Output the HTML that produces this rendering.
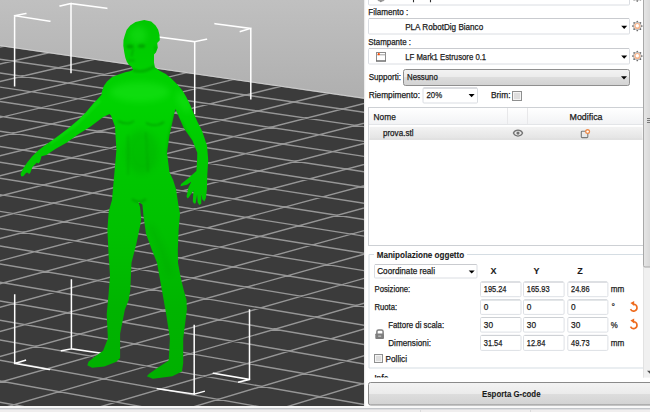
<!DOCTYPE html>
<html><head><meta charset="utf-8"><style>
html,body{margin:0;padding:0;}
body{width:650px;height:412px;overflow:hidden;position:relative;background:#ffffff;font-family:"Liberation Sans",sans-serif;}
</style></head><body>
<svg width="364" height="406" viewBox="0 0 364 406" style="position:absolute;left:0;top:0">
<defs><linearGradient id="bg" x1="0" y1="0" x2="0" y2="1"><stop offset="0" stop-color="#c0c0c0"/><stop offset="1" stop-color="#7a7a7a"/></linearGradient>
<clipPath id="fl"><path d="M0 45.64L364 98.22L364 406L0 406Z"/></clipPath></defs>
<rect width="364" height="406" fill="url(#bg)"/>
<path d="M0 45.64L364 98.22L364 406L0 406Z" fill="#3b3b3b"/>
<g clip-path="url(#fl)"><path d="M-811.4 -71.6L3835.6 599.8M-848.7 -64.7L3817.2 616.4M-886.5 -57.8L3798.6 633.3M-924.7 -50.7L3779.5 650.5M-963.2 -43.6L3760.2 668.0M-1002.3 -36.4L3740.5 685.9M-1041.8 -29.2L3720.4 704.0M-1081.7 -21.8L3700.0 722.5M-1122.1 -14.4L3679.2 741.3M-1162.9 -6.9L3658.0 760.5M-1204.2 0.7L3636.4 780.1M-1246.1 8.4L3614.4 800.0M-1288.4 16.2L3592.0 820.3M-1331.2 24.1L3569.1 841.0M-1374.5 32.1L3545.8 862.0M-1418.3 40.2L3522.1 883.6M-1462.6 48.3L3497.8 905.5M-1507.5 56.6L3473.1 927.9M-1553.0 65.0L3447.9 950.7M-1599.0 73.4L3422.1 974.0M-1645.5 82.0L3395.9 997.8M-1692.7 90.7L3369.0 1022.1M-1740.4 99.5L3341.6 1046.9M-1788.7 108.4L3313.6 1072.2M-1837.7 117.4L3285.0 1098.1M-1887.2 126.5L3255.8 1124.6M-1937.4 135.7L3226.0 1151.6M-1988.3 145.1L3195.4 1179.2M-2039.8 154.6L3164.2 1207.5M-2091.9 164.2L3132.2 1236.4M-2144.8 173.9L3099.6 1266.0M-2198.4 183.8L3066.1 1296.3M-2252.6 193.8L3031.9 1327.3M-2307.6 203.9L2996.8 1359.0M-2363.4 214.2L2960.9 1391.5M-2419.9 224.6L2924.1 1424.8M-2477.1 235.1L2886.4 1459.0M-2535.2 245.8L2847.7 1494.0M-2594.1 256.6L2808.0 1529.9M-2653.8 267.6L2767.4 1566.7M-811.4 -71.6L-4132.9 540.0M-774.2 -66.2L-4099.8 552.1M-736.6 -60.8L-4066.2 564.5M-698.6 -55.3L-4032.1 577.0M-660.3 -49.8L-3997.6 589.7M-621.7 -44.2L-3962.6 602.6M-582.7 -38.5L-3927.1 615.7M-543.3 -32.9L-3891.2 628.9M-503.6 -27.1L-3854.7 642.3M-463.5 -21.3L-3817.6 656.0M-423.0 -15.5L-3780.1 669.8M-382.2 -9.6L-3742.0 683.8M-340.9 -3.6L-3703.3 698.0M-299.2 2.4L-3664.1 712.5M-257.2 8.5L-3624.2 727.1M-214.7 14.6L-3583.8 742.0M-171.8 20.8L-3542.8 757.1M-128.5 27.1L-3501.1 772.4M-84.8 33.4L-3458.9 788.0M-40.7 39.8L-3415.9 803.8M3.9 46.2L-3372.3 819.9M49.0 52.7L-3328.0 836.2M94.5 59.3L-3283.0 852.7M140.4 65.9L-3237.3 869.6M186.9 72.6L-3190.8 886.7M233.8 79.4L-3143.6 904.0M281.1 86.3L-3095.6 921.7M329.0 93.2L-3046.9 939.6M377.3 100.2L-2997.3 957.9M426.2 107.2L-2946.9 976.4M475.6 114.3L-2895.6 995.3M525.5 121.6L-2843.5 1014.5M575.9 128.8L-2790.5 1034.0M626.8 136.2L-2736.5 1053.9M678.3 143.6L-2681.6 1074.1M730.4 151.2L-2625.8 1094.6M783.0 158.8L-2568.9 1115.5M836.2 166.4L-2511.0 1136.8M889.9 174.2L-2452.1 1158.5M944.3 182.1L-2392.1 1180.6M999.3 190.0L-2331.0 1203.1M1054.8 198.0L-2268.7 1226.0M1111.0 206.1L-2205.3 1249.3M1167.8 214.3L-2140.7 1273.1M1225.3 222.7L-2074.8 1297.4M1283.4 231.0L-2007.7 1322.1M1342.2 239.5L-1939.3 1347.3M1401.6 248.1L-1869.5 1372.9M1461.7 256.8L-1798.3 1399.1M1522.6 265.6L-1725.6 1425.9M1584.1 274.5L-1651.5 1453.1M1646.4 283.5L-1575.9 1481.0M1709.4 292.6L-1498.7 1509.4M1773.1 301.8L-1419.9 1538.4M1837.6 311.1L-1339.5 1568.0M1902.9 320.5L-1257.3 1598.3M1969.0 330.1L-1173.3 1629.2M2035.9 339.8L-1087.5 1660.7M2103.6 349.5L-999.7 1693.0M2172.1 359.4L-910.1 1726.0M2241.5 369.5L-818.3 1759.8M2311.8 379.6L-724.5 1794.3M2382.9 389.9L-628.6 1829.6M2454.9 400.3L-530.3 1865.8M2527.9 410.8L-429.8 1902.8M2601.8 421.5L-326.8 1940.7M2676.6 432.3L-221.3 1979.5M2752.4 443.3L-113.3 2019.3M2829.2 454.4L-2.5 2060.0M2907.0 465.6L111.0 2101.8M2985.9 477.0L227.5 2144.7M3065.7 488.5L346.9 2188.6M3146.7 500.2L469.5 2233.7M3228.7 512.1L595.4 2280.1M3311.9 524.1L724.6 2327.6M3396.2 536.3L857.3 2376.5M3481.7 548.6L993.7 2426.7M3568.3 561.1L1133.9 2478.3M3656.2 573.8L1278.2 2531.3M3745.3 586.7L1426.5 2585.9" stroke="#969696" stroke-width="1.4" fill="none"/></g>
<path d="M0.0 45.6L364.0 98.2" stroke="#d0d0d0" stroke-width="1" fill="none"/>
<path d="M14.6 15.7L14.6 85.7M14.6 15.7L49.8 21.2M14.6 15.7L25.8 13.6M71.0 3.5L71.0 72.6M71.0 3.5L106.7 8.3M71.0 3.5L60.1 5.9M194.7 41.7L194.7 113.4M194.7 41.7L158.5 36.9M194.7 41.7L206.4 39.3M250.8 28.4L250.8 98.8M250.8 28.4L215.1 23.7M250.8 28.4L240.4 31.5M14.7 294.9L14.7 363.5M14.7 363.5L49.4 369.4M14.7 363.5L25.4 360.3M71.4 279.9L71.4 348.8M71.4 348.8L106.7 354.0M71.4 348.8L61.5 350.7M194.2 325.5L194.2 394.1M194.2 394.1L157.4 388.8M194.2 394.1L204.1 391.4M249.5 310.0L249.5 379.4M249.5 379.4L213.4 373.3M249.5 379.4L238.8 382.1" stroke="#ffffff" stroke-width="1.5" fill="none" stroke-linecap="square"/>
<clipPath id="figc"><path d="M144.2 20.1L151.2 21.4L155.6 25.4L158.2 29.7L159.5 35.0L159.8 40.2L157.2 43.0L157.8 47.8L155.9 52.6L154.0 54.6L154.0 62.4L154.9 67.2L157.8 69.2L159.1 70.5L165.8 74.1L171.8 79.0L177.9 85.1L182.8 91.1L186.4 97.2L190.0 104.5L193.1 112.0L197.5 122.0L202.1 130.9L207.0 145.5L208.2 160.0L207.3 174.6L206.9 189.1L205.9 197.9L204.4 201.5L202.2 199.3L201.5 194.2L201.2 203.7L199.3 204.9L197.6 202.2L197.1 194.2L195.7 203.0L194.2 203.7L192.8 201.5L193.5 190.6L189.1 197.1L187.7 198.6L186.5 196.4L188.4 187.7L191.3 181.8L186.9 184.8L180.4 186.2L181.1 184.0L189.1 177.5L196.4 170.9L197.1 160.0L197.3 152.7L192.4 140.6L184.0 128.5L175.5 109.1L174.2 114.0L169.4 135.8L167.0 152.7L169.4 172.1L173.1 180.0L176.0 189.1L178.2 203.7L180.0 214.0L178.6 230.0L177.8 250.0L178.0 263.0L180.8 278.0L183.7 290.0L186.5 300.0L186.9 309.4L183.2 338.6L183.2 362.9L182.0 371.4L172.3 376.2L152.9 378.7L146.8 376.2L149.2 373.8L157.7 367.7L168.7 360.4L169.9 338.6L166.2 314.3L161.9 290.0L157.0 262.8L152.2 250.7L146.0 233.7L143.6 216.7L142.4 204.6L138.5 202.0L140.0 207.0L141.2 219.0L140.0 226.4L136.4 243.4L131.5 262.8L130.3 290.0L128.7 300.0L124.9 309.4L120.1 333.7L120.1 349.5L120.1 358.0L116.4 361.7L104.3 366.5L92.1 367.7L87.3 365.3L88.5 361.7L94.6 356.8L103.1 350.7L107.9 338.6L106.7 314.3L108.5 295.0L110.0 275.4L108.7 256.8L107.4 230.0L108.7 211.4L112.0 200.0L114.4 172.9L116.4 150.0L115.0 126.6L111.0 115.5L109.5 114.0L103.2 117.1L90.6 126.6L77.9 134.5L66.9 142.4L55.8 148.7L46.3 155.0L41.5 156.3L40.0 161.4L38.5 163.5L36.9 162.4L33.4 166.0L32.3 167.6L30.3 172.7L28.8 174.2L28.3 172.7L26.2 172.7L23.2 176.2L21.1 176.2L20.6 173.7L23.2 168.6L27.2 162.4L32.3 156.3L38.5 150.2L44.7 145.6L55.8 137.7L68.4 128.2L77.9 120.3L85.8 112.4L93.7 102.9L97.3 99.6L101.5 94.8L102.1 91.1L104.0 85.7L107.0 81.4L111.8 77.2L117.9 74.7L125.2 72.3L130.0 71.2L133.1 69.8L131.6 66.7L128.7 64.8L126.7 61.4L125.3 57.5L124.3 52.6L123.3 45.8L123.5 40.0L124.6 35.9L126.7 29.7L130.2 25.4L135.5 21.9Z"/></clipPath>
<filter id="bl4" x="-50%" y="-50%" width="200%" height="200%"><feGaussianBlur stdDeviation="3"/></filter>
<filter id="bl1" x="-50%" y="-50%" width="200%" height="200%"><feGaussianBlur stdDeviation="1"/></filter>
<linearGradient id="figg" gradientUnits="userSpaceOnUse" x1="0" y1="20" x2="0" y2="380"><stop offset="0" stop-color="#00c800"/><stop offset="0.22" stop-color="#00d400"/><stop offset="0.4" stop-color="#00c800"/><stop offset="0.6" stop-color="#00c000"/><stop offset="0.8" stop-color="#00b400"/><stop offset="1" stop-color="#00b000"/></linearGradient>
<path d="M144.2 20.1L151.2 21.4L155.6 25.4L158.2 29.7L159.5 35.0L159.8 40.2L157.2 43.0L157.8 47.8L155.9 52.6L154.0 54.6L154.0 62.4L154.9 67.2L157.8 69.2L159.1 70.5L165.8 74.1L171.8 79.0L177.9 85.1L182.8 91.1L186.4 97.2L190.0 104.5L193.1 112.0L197.5 122.0L202.1 130.9L207.0 145.5L208.2 160.0L207.3 174.6L206.9 189.1L205.9 197.9L204.4 201.5L202.2 199.3L201.5 194.2L201.2 203.7L199.3 204.9L197.6 202.2L197.1 194.2L195.7 203.0L194.2 203.7L192.8 201.5L193.5 190.6L189.1 197.1L187.7 198.6L186.5 196.4L188.4 187.7L191.3 181.8L186.9 184.8L180.4 186.2L181.1 184.0L189.1 177.5L196.4 170.9L197.1 160.0L197.3 152.7L192.4 140.6L184.0 128.5L175.5 109.1L174.2 114.0L169.4 135.8L167.0 152.7L169.4 172.1L173.1 180.0L176.0 189.1L178.2 203.7L180.0 214.0L178.6 230.0L177.8 250.0L178.0 263.0L180.8 278.0L183.7 290.0L186.5 300.0L186.9 309.4L183.2 338.6L183.2 362.9L182.0 371.4L172.3 376.2L152.9 378.7L146.8 376.2L149.2 373.8L157.7 367.7L168.7 360.4L169.9 338.6L166.2 314.3L161.9 290.0L157.0 262.8L152.2 250.7L146.0 233.7L143.6 216.7L142.4 204.6L138.5 202.0L140.0 207.0L141.2 219.0L140.0 226.4L136.4 243.4L131.5 262.8L130.3 290.0L128.7 300.0L124.9 309.4L120.1 333.7L120.1 349.5L120.1 358.0L116.4 361.7L104.3 366.5L92.1 367.7L87.3 365.3L88.5 361.7L94.6 356.8L103.1 350.7L107.9 338.6L106.7 314.3L108.5 295.0L110.0 275.4L108.7 256.8L107.4 230.0L108.7 211.4L112.0 200.0L114.4 172.9L116.4 150.0L115.0 126.6L111.0 115.5L109.5 114.0L103.2 117.1L90.6 126.6L77.9 134.5L66.9 142.4L55.8 148.7L46.3 155.0L41.5 156.3L40.0 161.4L38.5 163.5L36.9 162.4L33.4 166.0L32.3 167.6L30.3 172.7L28.8 174.2L28.3 172.7L26.2 172.7L23.2 176.2L21.1 176.2L20.6 173.7L23.2 168.6L27.2 162.4L32.3 156.3L38.5 150.2L44.7 145.6L55.8 137.7L68.4 128.2L77.9 120.3L85.8 112.4L93.7 102.9L97.3 99.6L101.5 94.8L102.1 91.1L104.0 85.7L107.0 81.4L111.8 77.2L117.9 74.7L125.2 72.3L130.0 71.2L133.1 69.8L131.6 66.7L128.7 64.8L126.7 61.4L125.3 57.5L124.3 52.6L123.3 45.8L123.5 40.0L124.6 35.9L126.7 29.7L130.2 25.4L135.5 21.9Z" fill="url(#figg)"/>
<g clip-path="url(#figc)">
<ellipse cx="140" cy="92" rx="30" ry="10" fill="#40ff40" opacity="0.22" filter="url(#bl4)"/>
<ellipse cx="138" cy="35" rx="9" ry="9" fill="#40ff40" opacity="0.22" filter="url(#bl4)"/>
<ellipse cx="142" cy="152" rx="16" ry="22" fill="#007000" opacity="0.12" filter="url(#bl4)"/>
<path d="M118 121Q128 126 134 121M146 123Q156 128 164 122" stroke="#006000" stroke-width="1.6" fill="none" opacity="0.35" filter="url(#bl1)"/>
<path d="M176 112L170 135L168 155" stroke="#006000" stroke-width="3" fill="none" opacity="0.25" filter="url(#bl1)"/>
<path d="M180 120L190 140L195 160" stroke="#006000" stroke-width="3" fill="none" opacity="0.15" filter="url(#bl1)"/>
<ellipse cx="184" cy="102" rx="6" ry="12" transform="rotate(-30 184 102)" fill="#40ff40" opacity="0.18" filter="url(#bl4)"/>
<path d="M100 100L75 125L50 143" stroke="#40ff40" stroke-width="4" fill="none" opacity="0.15" filter="url(#bl1)"/>
<path d="M128 135V175M146 132L148 172" stroke="#006000" stroke-width="1.5" fill="none" opacity="0.15" filter="url(#bl1)"/>
<ellipse cx="130" cy="46.5" rx="3.6" ry="1.9" fill="#006000" opacity="0.35" filter="url(#bl1)"/>
<ellipse cx="141.5" cy="46" rx="3.6" ry="1.9" fill="#006000" opacity="0.35" filter="url(#bl1)"/>
<path d="M133 49L131.5 56.5M128.5 60.5H134.5M155.5 46V52" stroke="#006000" stroke-width="1.4" fill="none" opacity="0.3" filter="url(#bl1)"/>
<path d="M133 70Q143 74 155 66" stroke="#006000" stroke-width="2.5" fill="none" opacity="0.3" filter="url(#bl1)"/>
<path d="M132 199Q139 205 146 199" stroke="#006000" stroke-width="2" fill="none" opacity="0.3" filter="url(#bl1)"/>
<path d="M150 225Q163 250 170 275" stroke="#006000" stroke-width="4" fill="none" opacity="0.12" filter="url(#bl4)"/>
</g>
</svg>
<svg width="650" height="412" viewBox="0 0 650 412" style="position:absolute;left:0;top:0" font-family="Liberation Sans, sans-serif">
<defs><linearGradient id="btn" x1="0" y1="0" x2="0" y2="1"><stop offset="0" stop-color="#f3f3f3"/><stop offset="0.5" stop-color="#ebebeb"/><stop offset="0.5" stop-color="#dddddd"/><stop offset="1" stop-color="#d2d2d2"/></linearGradient><linearGradient id="sel" x1="0" y1="0" x2="0" y2="1"><stop offset="0" stop-color="#f3f3f3"/><stop offset="1" stop-color="#e3e3e3"/></linearGradient><linearGradient id="hdr" x1="0" y1="0" x2="0" y2="1"><stop offset="0" stop-color="#ffffff"/><stop offset="1" stop-color="#f2f3f5"/></linearGradient><linearGradient id="thumb" x1="0" y1="0" x2="1" y2="0"><stop offset="0" stop-color="#e6e6e6"/><stop offset="1" stop-color="#d6d6d6"/></linearGradient></defs>
<rect x="364" y="0" width="286" height="406" fill="#ffffff"/><rect x="364" y="0" width="1.2" height="406" fill="#ececec"/>
<rect x="368.5" y="-11.5" width="261" height="16.5" rx="1" fill="#fff" stroke="#dadde2"/><line x1="369" y1="-11.5" x2="629" y2="-11.5" stroke="#c9cbcf"/>
<ellipse cx="381" cy="-1.5" rx="4" ry="3.2" fill="#9a9a9a"/><circle cx="380.8" cy="1.3" r="0.9" fill="#8a8a8a"/>
<path d="M413.5 0v2.2M430.5 0v2.2" stroke="#333" stroke-width="1.1"/>
<circle cx="637.3" cy="-3.5" r="4.0" fill="#e4e4e4" stroke="#9a9a9a" stroke-width="0.6"/><circle cx="641.80" cy="-3.50" r="0.85" fill="#707070"/><circle cx="640.48" cy="-0.32" r="0.85" fill="#707070"/><circle cx="637.30" cy="1.00" r="0.85" fill="#707070"/><circle cx="634.12" cy="-0.32" r="0.85" fill="#707070"/><circle cx="632.80" cy="-3.50" r="0.85" fill="#707070"/><circle cx="634.12" cy="-6.68" r="0.85" fill="#707070"/><circle cx="637.30" cy="-8.00" r="0.85" fill="#707070"/><circle cx="640.48" cy="-6.68" r="0.85" fill="#707070"/><circle cx="637.3" cy="-3.5" r="3.1" fill="#f6b48c"/><circle cx="637.3" cy="-3.8" r="1.7" fill="#ffffff"/>
<text x="368.3" y="15" font-size="9" textLength="40" lengthAdjust="spacingAndGlyphs" fill="#1a1a1a" stroke="#1a1a1a" stroke-width="0.25">Filamento :</text>
<rect x="368.5" y="18.5" width="261" height="15.5" rx="1" fill="#fff" stroke="#dadde2"/><line x1="369" y1="18.5" x2="629" y2="18.5" stroke="#c9cbcf"/>
<text x="405.2" y="30" font-size="9" textLength="78" lengthAdjust="spacingAndGlyphs" fill="#1a1a1a" stroke="#1a1a1a" stroke-width="0.25">PLA RobotDig Bianco</text>
<path d="M621.2 25.799999999999997L627.2 25.799999999999997L624.2 29.0Z" fill="#000"/>
<circle cx="637.3" cy="26" r="4.0" fill="#e4e4e4" stroke="#9a9a9a" stroke-width="0.6"/><circle cx="641.80" cy="26.00" r="0.85" fill="#707070"/><circle cx="640.48" cy="29.18" r="0.85" fill="#707070"/><circle cx="637.30" cy="30.50" r="0.85" fill="#707070"/><circle cx="634.12" cy="29.18" r="0.85" fill="#707070"/><circle cx="632.80" cy="26.00" r="0.85" fill="#707070"/><circle cx="634.12" cy="22.82" r="0.85" fill="#707070"/><circle cx="637.30" cy="21.50" r="0.85" fill="#707070"/><circle cx="640.48" cy="22.82" r="0.85" fill="#707070"/><circle cx="637.3" cy="26" r="3.1" fill="#f6b48c"/><circle cx="637.3" cy="25.7" r="1.7" fill="#ffffff"/>
<text x="368.3" y="45" font-size="9" textLength="42.7" lengthAdjust="spacingAndGlyphs" fill="#1a1a1a" stroke="#1a1a1a" stroke-width="0.25">Stampante :</text>
<rect x="368.5" y="48.5" width="261" height="15.5" rx="1" fill="#fff" stroke="#dadde2"/><line x1="369" y1="48.5" x2="629" y2="48.5" stroke="#c9cbcf"/>
<rect x="376.5" y="52.5" width="9" height="8.5" fill="#fff" stroke="#8c8c8c"/><line x1="376.5" y1="54.8" x2="385.5" y2="54.8" stroke="#a0a0a0"/><line x1="376" y1="61" x2="386" y2="61" stroke="#606060"/><circle cx="378.8" cy="54.2" r="1.1" fill="#ff4a00"/>
<text x="405.2" y="59.6" font-size="9" textLength="81" lengthAdjust="spacingAndGlyphs" fill="#1a1a1a" stroke="#1a1a1a" stroke-width="0.25">LF Mark1 Estrusore 0.1</text>
<path d="M621.2 55.6L627.2 55.6L624.2 58.800000000000004Z" fill="#000"/>
<circle cx="637.3" cy="56" r="4.0" fill="#e4e4e4" stroke="#9a9a9a" stroke-width="0.6"/><circle cx="641.80" cy="56.00" r="0.85" fill="#707070"/><circle cx="640.48" cy="59.18" r="0.85" fill="#707070"/><circle cx="637.30" cy="60.50" r="0.85" fill="#707070"/><circle cx="634.12" cy="59.18" r="0.85" fill="#707070"/><circle cx="632.80" cy="56.00" r="0.85" fill="#707070"/><circle cx="634.12" cy="52.82" r="0.85" fill="#707070"/><circle cx="637.30" cy="51.50" r="0.85" fill="#707070"/><circle cx="640.48" cy="52.82" r="0.85" fill="#707070"/><circle cx="637.3" cy="56" r="3.1" fill="#f6b48c"/><circle cx="637.3" cy="55.7" r="1.7" fill="#ffffff"/>
<text x="368.7" y="80.2" font-size="9" textLength="32.3" lengthAdjust="spacingAndGlyphs" fill="#1a1a1a" stroke="#1a1a1a" stroke-width="0.25">Supporti:</text>
<rect x="403.5" y="69.5" width="226" height="16" rx="2" fill="url(#btn)" stroke="#8f8f8f"/>
<text x="407" y="80.2" font-size="9" textLength="30.8" lengthAdjust="spacingAndGlyphs" fill="#1a1a1a" stroke="#1a1a1a" stroke-width="0.25">Nessuno</text>
<path d="M621.0 76.2L627.0 76.2L624 79.39999999999999Z" fill="#000"/>
<text x="368.7" y="98" font-size="9" textLength="51.3" lengthAdjust="spacingAndGlyphs" fill="#1a1a1a" stroke="#1a1a1a" stroke-width="0.25">Riempimento:</text>
<rect x="423.0" y="88.0" width="54.5" height="15.0" rx="1" fill="#fff" stroke="#dadde2"/><line x1="423.5" y1="88.0" x2="477" y2="88.0" stroke="#c9cbcf"/>
<text x="426.5" y="98" font-size="9" textLength="15.6" lengthAdjust="spacingAndGlyphs" fill="#1a1a1a" stroke="#1a1a1a" stroke-width="0.25">20%</text>
<path d="M468.6 94.0L474.6 94.0L471.6 97.19999999999999Z" fill="#000"/>
<text x="491" y="98" font-size="9" textLength="19.5" lengthAdjust="spacingAndGlyphs" fill="#1a1a1a" stroke="#1a1a1a" stroke-width="0.25">Brim:</text>
<rect x="512.5" y="91.5" width="9" height="9" fill="#f4f4f4" stroke="#8e8f8f"/><rect x="514" y="93" width="6" height="6" fill="#dedede"/>
<rect x="368.5" y="107.5" width="276" height="138" fill="#fff" stroke="#cdd0d4"/>
<rect x="369" y="108" width="274" height="16" fill="url(#hdr)"/>
<line x1="369" y1="124.5" x2="643" y2="124.5" stroke="#e3e5e8"/>
<line x1="507.5" y1="108" x2="507.5" y2="124" stroke="#e8e8ea"/><line x1="527.5" y1="108" x2="527.5" y2="124" stroke="#e8e8ea"/>
<text x="373.6" y="120.3" font-size="9" textLength="22.2" lengthAdjust="spacingAndGlyphs" fill="#1a1a1a" stroke="#1a1a1a" stroke-width="0.25">Nome</text>
<text x="569.5" y="120.3" font-size="9" textLength="33" lengthAdjust="spacingAndGlyphs" fill="#1a1a1a" stroke="#1a1a1a" stroke-width="0.25">Modifica</text>
<rect x="369.5" y="126.8" width="273" height="12.7" fill="url(#sel)"/><line x1="369.5" y1="139.2" x2="642.5" y2="139.2" stroke="#dadada"/>
<text x="382.9" y="136.3" font-size="9" textLength="30.6" lengthAdjust="spacingAndGlyphs" fill="#1a1a1a" stroke="#1a1a1a" stroke-width="0.25">prova.stl</text>
<path d="M513.4 133.1C515.2 129.2 520.8 129.2 522.6 133.1C520.8 137 515.2 137 513.4 133.1Z" fill="none" stroke="#737373" stroke-width="1.25"/><circle cx="518" cy="133.1" r="1.6" fill="#707070"/>
<rect x="581.3" y="131.3" width="6.5" height="6.3" rx="0.8" fill="none" stroke="#7a7a7a" stroke-width="1.1"/>
<circle cx="587.6" cy="131.6" r="2.5" fill="#f08a48"/><circle cx="587.6" cy="131.6" r="1.2" fill="#fff"/>
<path d="M369 368V254.5H374M467 254.5H643M369 368H643" fill="none" stroke="#d5dde3"/>
<text x="376.7" y="257.6" font-size="9" textLength="87.5" lengthAdjust="spacingAndGlyphs" font-weight="bold" fill="#1a1a1a" stroke="#1a1a1a" stroke-width="0.1">Manipolazione oggetto</text>
<rect x="374.5" y="264.5" width="102.5" height="13.5" rx="1" fill="#fff" stroke="#dadde2"/><line x1="375" y1="264.5" x2="476.5" y2="264.5" stroke="#c9cbcf"/>
<text x="377.2" y="274" font-size="9" textLength="57.8" lengthAdjust="spacingAndGlyphs" fill="#1a1a1a" stroke="#1a1a1a" stroke-width="0.25">Coordinate reali</text>
<path d="M468.7 270.4L474.7 270.4L471.7 273.6Z" fill="#000"/>
<text x="493.6" y="274.3" font-size="9" font-weight="bold" text-anchor="middle" fill="#1a1a1a" stroke="#1a1a1a" stroke-width="0.1">X</text>
<text x="536.6" y="274.3" font-size="9" font-weight="bold" text-anchor="middle" fill="#1a1a1a" stroke="#1a1a1a" stroke-width="0.1">Y</text>
<text x="579.9" y="274.3" font-size="9" font-weight="bold" text-anchor="middle" fill="#1a1a1a" stroke="#1a1a1a" stroke-width="0.1">Z</text>
<text x="374.5" y="292.2" font-size="9" textLength="35.7" lengthAdjust="spacingAndGlyphs" fill="#1a1a1a" stroke="#1a1a1a" stroke-width="0.25">Posizione:</text>
<text x="374.4" y="310.2" font-size="9" textLength="22.8" lengthAdjust="spacingAndGlyphs" fill="#1a1a1a" stroke="#1a1a1a" stroke-width="0.25">Ruota:</text>
<text x="388.2" y="328.1" font-size="9" textLength="56" lengthAdjust="spacingAndGlyphs" fill="#1a1a1a" stroke="#1a1a1a" stroke-width="0.25">Fattore di scala:</text>
<text x="388.2" y="346" font-size="9" textLength="42.8" lengthAdjust="spacingAndGlyphs" fill="#1a1a1a" stroke="#1a1a1a" stroke-width="0.25">Dimensioni:</text>
<text x="385.5" y="361.6" font-size="9" textLength="21.5" lengthAdjust="spacingAndGlyphs" fill="#1a1a1a" stroke="#1a1a1a" stroke-width="0.25">Pollici</text>
<rect x="374.5" y="354.5" width="8" height="8" fill="#f4f4f4" stroke="#8e8f8f"/><rect x="376" y="356" width="5" height="5" fill="#dedede"/>
<path d="M376.9 334.2V331.6Q376.9 329.9 378.6 329.9H381.4Q383.1 329.9 383.1 331.6V334.2" fill="none" stroke="#808080" stroke-width="1.5"/><rect x="375.3" y="333.4" width="8.7" height="5.6" rx="0.9" fill="#7e7e7e"/><rect x="378.2" y="335.6" width="3" height="1.1" fill="#cfcfcf"/>
<rect x="480.5" y="282.0" width="40.5" height="14.699999999999989" rx="1.2" fill="#fff" stroke="#dde0e5"/><line x1="481.5" y1="282.0" x2="520.0" y2="282.0" stroke="#cdd0d4"/>
<text x="483.8" y="292.3" font-size="9" textLength="22.7" lengthAdjust="spacingAndGlyphs" fill="#1a1a1a" stroke="#1a1a1a" stroke-width="0.25">195.24</text>
<rect x="523.5" y="282.0" width="40.60000000000002" height="14.699999999999989" rx="1.2" fill="#fff" stroke="#dde0e5"/><line x1="524.5" y1="282.0" x2="563.1" y2="282.0" stroke="#cdd0d4"/>
<text x="526.8" y="292.3" font-size="9" textLength="22.8" lengthAdjust="spacingAndGlyphs" fill="#1a1a1a" stroke="#1a1a1a" stroke-width="0.25">165.93</text>
<rect x="567.8" y="282.0" width="40.10000000000002" height="14.699999999999989" rx="1.2" fill="#fff" stroke="#dde0e5"/><line x1="568.8" y1="282.0" x2="606.9" y2="282.0" stroke="#cdd0d4"/>
<text x="571.0999999999999" y="292.3" font-size="9" textLength="18.5" lengthAdjust="spacingAndGlyphs" fill="#1a1a1a" stroke="#1a1a1a" stroke-width="0.25">24.86</text>
<rect x="480.5" y="299.9" width="40.5" height="14.5" rx="1.2" fill="#fff" stroke="#dde0e5"/><line x1="481.5" y1="299.9" x2="520.0" y2="299.9" stroke="#cdd0d4"/>
<text x="483.8" y="310.2" font-size="9" textLength="4.6" lengthAdjust="spacingAndGlyphs" fill="#1a1a1a" stroke="#1a1a1a" stroke-width="0.25">0</text>
<rect x="523.5" y="299.9" width="40.60000000000002" height="14.5" rx="1.2" fill="#fff" stroke="#dde0e5"/><line x1="524.5" y1="299.9" x2="563.1" y2="299.9" stroke="#cdd0d4"/>
<text x="526.8" y="310.2" font-size="9" textLength="4.6" lengthAdjust="spacingAndGlyphs" fill="#1a1a1a" stroke="#1a1a1a" stroke-width="0.25">0</text>
<rect x="567.8" y="299.9" width="40.10000000000002" height="14.5" rx="1.2" fill="#fff" stroke="#dde0e5"/><line x1="568.8" y1="299.9" x2="606.9" y2="299.9" stroke="#cdd0d4"/>
<text x="571.0999999999999" y="310.2" font-size="9" textLength="4.6" lengthAdjust="spacingAndGlyphs" fill="#1a1a1a" stroke="#1a1a1a" stroke-width="0.25">0</text>
<rect x="480.5" y="317.5" width="40.5" height="14.600000000000023" rx="1.2" fill="#fff" stroke="#dde0e5"/><line x1="481.5" y1="317.5" x2="520.0" y2="317.5" stroke="#cdd0d4"/>
<text x="483.8" y="327.8" font-size="9" textLength="9.2" lengthAdjust="spacingAndGlyphs" fill="#1a1a1a" stroke="#1a1a1a" stroke-width="0.25">30</text>
<rect x="523.5" y="317.5" width="40.60000000000002" height="14.600000000000023" rx="1.2" fill="#fff" stroke="#dde0e5"/><line x1="524.5" y1="317.5" x2="563.1" y2="317.5" stroke="#cdd0d4"/>
<text x="526.8" y="327.8" font-size="9" textLength="9.2" lengthAdjust="spacingAndGlyphs" fill="#1a1a1a" stroke="#1a1a1a" stroke-width="0.25">30</text>
<rect x="567.8" y="317.5" width="40.10000000000002" height="14.600000000000023" rx="1.2" fill="#fff" stroke="#dde0e5"/><line x1="568.8" y1="317.5" x2="606.9" y2="317.5" stroke="#cdd0d4"/>
<text x="571.0999999999999" y="327.8" font-size="9" textLength="9.2" lengthAdjust="spacingAndGlyphs" fill="#1a1a1a" stroke="#1a1a1a" stroke-width="0.25">30</text>
<rect x="480.5" y="335.4" width="40.5" height="15.0" rx="1.2" fill="#fff" stroke="#dde0e5"/><line x1="481.5" y1="335.4" x2="520.0" y2="335.4" stroke="#cdd0d4"/>
<text x="483.8" y="345.7" font-size="9" textLength="18.5" lengthAdjust="spacingAndGlyphs" fill="#1a1a1a" stroke="#1a1a1a" stroke-width="0.25">31.54</text>
<rect x="523.5" y="335.4" width="40.60000000000002" height="15.0" rx="1.2" fill="#fff" stroke="#dde0e5"/><line x1="524.5" y1="335.4" x2="563.1" y2="335.4" stroke="#cdd0d4"/>
<text x="526.8" y="345.7" font-size="9" textLength="18.5" lengthAdjust="spacingAndGlyphs" fill="#1a1a1a" stroke="#1a1a1a" stroke-width="0.25">12.84</text>
<rect x="567.8" y="335.4" width="40.10000000000002" height="15.0" rx="1.2" fill="#fff" stroke="#dde0e5"/><line x1="568.8" y1="335.4" x2="606.9" y2="335.4" stroke="#cdd0d4"/>
<text x="571.0999999999999" y="345.7" font-size="9" textLength="18.5" lengthAdjust="spacingAndGlyphs" fill="#1a1a1a" stroke="#1a1a1a" stroke-width="0.25">49.73</text>
<text x="610.7" y="292.2" font-size="9" textLength="13.5" lengthAdjust="spacingAndGlyphs" fill="#1a1a1a" stroke="#1a1a1a" stroke-width="0.25">mm</text>
<text x="611.5" y="310.2" font-size="9" textLength="3.5" lengthAdjust="spacingAndGlyphs" fill="#1a1a1a" stroke="#1a1a1a" stroke-width="0.25">°</text>
<text x="610.8" y="328.1" font-size="9" textLength="7" lengthAdjust="spacingAndGlyphs" fill="#1a1a1a" stroke="#1a1a1a" stroke-width="0.25">%</text>
<text x="610.7" y="346" font-size="9" textLength="13.5" lengthAdjust="spacingAndGlyphs" fill="#1a1a1a" stroke="#1a1a1a" stroke-width="0.25">mm</text>
<path d="M633.60 304.30A3.4 3.4 0 1 1 630.52 309.14" fill="none" stroke="#ee6a1c" stroke-width="1.6"/>
<path d="M630.40 303.10L634.20 301.10L634.20 305.90Z" fill="#ee6a1c"/>
<path d="M633.60 321.80A3.4 3.4 0 1 1 630.52 326.64" fill="none" stroke="#ee6a1c" stroke-width="1.6"/>
<path d="M630.40 320.60L634.20 318.60L634.20 323.40Z" fill="#ee6a1c"/>
<clipPath id="sc"><rect x="364" y="0" width="279" height="377.6"/></clipPath>
<g clip-path="url(#sc)"><text x="374.5" y="381.3" font-size="9" textLength="14" lengthAdjust="spacingAndGlyphs" font-weight="bold" fill="#1a1a1a" stroke="#1a1a1a" stroke-width="0.1">Info</text></g>
<rect x="643" y="0" width="7" height="377.6" fill="#f0f0f0"/>
<line x1="643.5" y1="0" x2="643.5" y2="377.6" stroke="#e2e2e2"/>
<rect x="643.5" y="-2" width="8" height="269" rx="1.5" fill="url(#thumb)" stroke="#a8a8a8"/>
<path d="M647 118.5h3M647 120.5h3M647 122.5h3" stroke="#6e6e6e" stroke-width="0.9"/>
<path d="M647.0 370.8L653.0 370.8L650 373.8Z" fill="#505050"/>
<rect x="368.5" y="382.5" width="284" height="22.5" rx="2" fill="url(#btn)" stroke="#8a8a8a"/>
<text x="482" y="397.4" font-size="9" textLength="58.5" lengthAdjust="spacingAndGlyphs" font-weight="bold" fill="#1a1a1a" stroke="#1a1a1a" stroke-width="0.1">Esporta G-code</text>
<rect x="0" y="406" width="650" height="6" fill="#f0eeee"/>
<rect x="0" y="406" width="650" height="2" fill="#f8f8f8"/>
<rect x="0" y="408" width="650" height="1.4" fill="#c3c6ca"/>
<path d="M420.5 410V412M530.5 410V412" stroke="#dadada"/>
</svg>
</body></html>
